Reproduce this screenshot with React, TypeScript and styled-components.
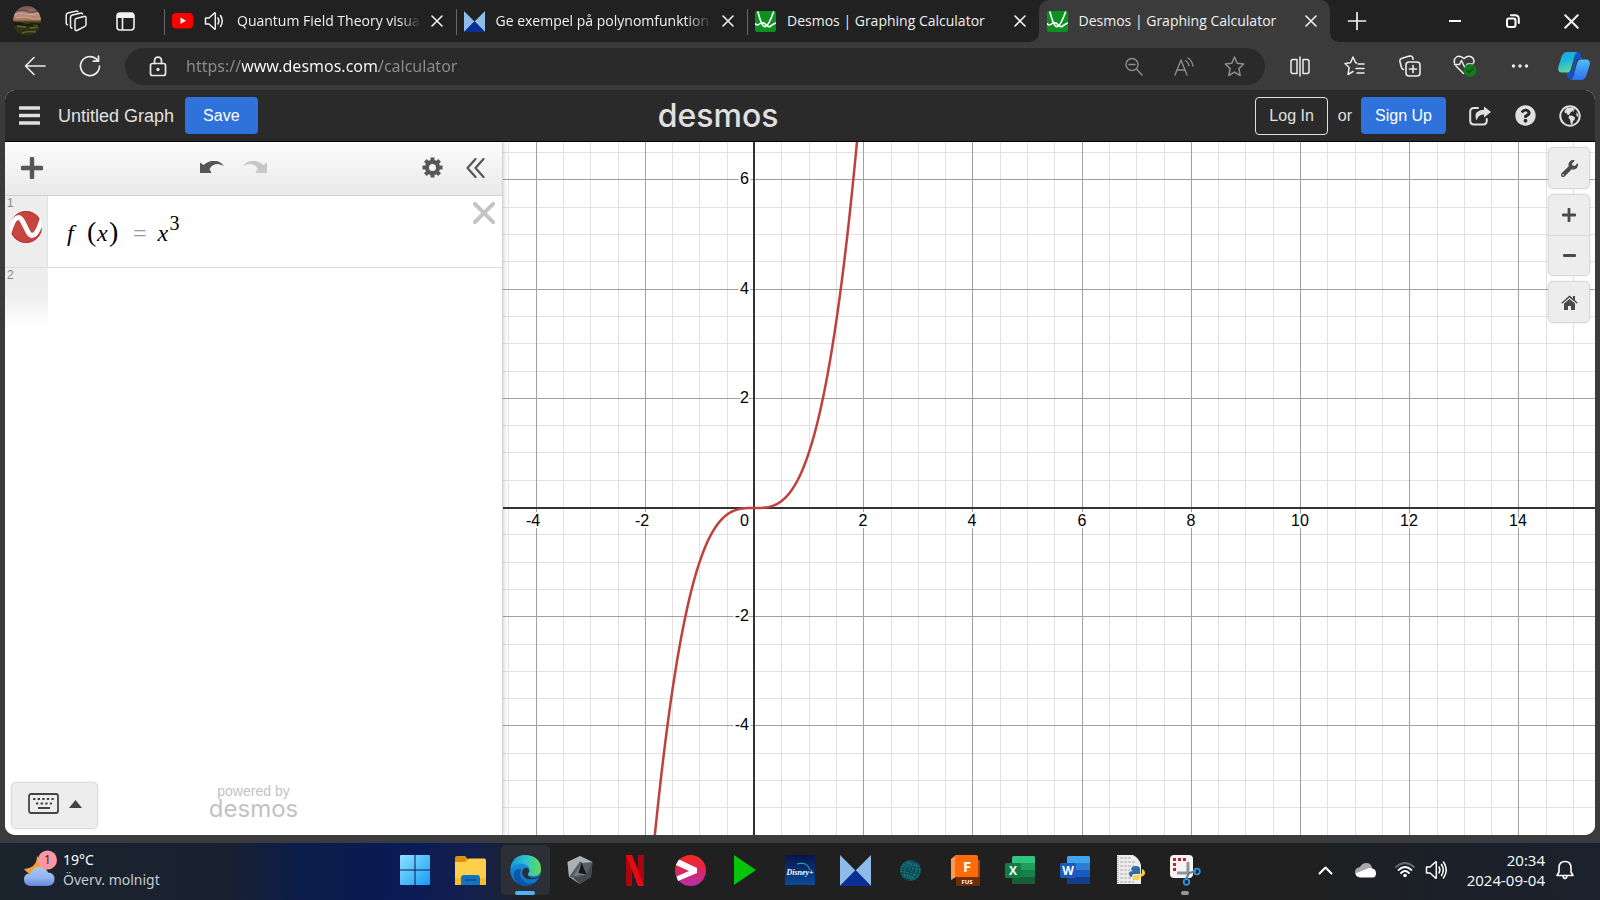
import React, { useLayoutEffect, useRef, useState } from "react";
import styled, { createGlobalStyle, css } from "styled-components";
import { FaWrench, FaQuestionCircle } from "react-icons/fa";

const ui = `"Open Sans", "Noto Sans", sans-serif`;
const uiWide = `"Noto Sans", "Open Sans", sans-serif`;
const sans = `"Liberation Sans", Arial, sans-serif`;
const logoFont = `Inter, "Liberation Sans", sans-serif`;

const GlobalStyle = createGlobalStyle`
  *, *::before, *::after { box-sizing: border-box; }
  html, body { margin: 0; height: 100%; }
  #root { height: 100%; }
  body { background: #3b3b3b; font-family: ${ui}; overflow: hidden; }
  button { font: inherit; color: inherit; background: none; border: 0; padding: 0; margin: 0; cursor: pointer; }
  svg { display: block; flex: none; }
`;

const Desktop = styled.div`
  display: flex;
  flex-direction: column;
  height: 100vh;
  min-height: 480px;
`;

/* ---------- browser chrome ---------- */

const TabStrip = styled.header`
  display: flex;
  flex: none;
  height: 42px;
  background: #212121;
  color: #f0f0f0;
`;

const StripTools = styled.div`
  display: flex;
  flex: none;
  align-items: center;
  width: 164px;
  padding-left: 13px;
`;

const Avatar = styled.button`
  width: 30px;
  height: 30px;
  margin-right: 23px;
  border-radius: 50%;
  overflow: hidden;
`;

const StripButton = styled.button`
  display: grid;
  place-items: center;
  width: 26px;
  height: 30px;
  margin-right: 26px;
`;

const TabList = styled.nav`
  display: flex;
  flex: 0 1 1166px;
  min-width: 0;
`;

const Tab = styled.div<{ $active?: boolean; $divider?: boolean }>`
  position: relative;
  display: flex;
  flex: 1 1 0;
  align-items: center;
  min-width: 0;
  padding: 0 9px 0 8px;
  ${(p) =>
    p.$divider &&
    css`
      &::before {
        content: "";
        position: absolute;
        left: 0;
        top: 9px;
        width: 1px;
        height: 26px;
        background: #666;
      }
    `}
  ${(p) =>
    p.$active &&
    css`
      background: #3b3b3b;
      border-radius: 10px 10px 0 0;
      &::before,
      &::after {
        content: "";
        position: absolute;
        bottom: 0;
        width: 8px;
        height: 8px;
      }
      &::before {
        right: 100%;
        background: radial-gradient(circle at 0 0, transparent 7px, #3b3b3b 8px);
      }
      &::after {
        left: 100%;
        background: radial-gradient(circle at 100% 0, transparent 7px, #3b3b3b 8px);
      }
    `}
`;

const TabTitle = styled.a<{ $fade?: boolean }>`
  flex: 1;
  min-width: 0;
  margin: 0 6px 0 11px;
  overflow: hidden;
  white-space: nowrap;
  font-size: 14px;
  line-height: 24px;
  color: inherit;
  text-decoration: none;
  ${(p) => p.$fade && css`mask-image: linear-gradient(to right, #000 88%, transparent 100%);`}
`;

const TabButton = styled.button`
  display: grid;
  flex: none;
  place-items: center;
  width: 20px;
  height: 24px;
`;

const MuteButton = styled(TabButton)`
  width: 22px;
  margin-left: 11px;
`;

const NewTab = styled.button`
  display: grid;
  flex: none;
  place-items: center;
  width: 54px;
`;

const WindowControls = styled.div`
  display: flex;
  flex: none;
  margin-left: auto;
`;

const WindowButton = styled.button`
  display: grid;
  place-items: center;
  width: 58px;
`;

const Toolbar = styled.div`
  display: flex;
  flex: none;
  align-items: center;
  height: 48px;
  padding: 0 0 0 15px;
  background: #3b3b3b;
  color: #ececec;
`;

const ToolButton = styled.button<{ $w?: number }>`
  display: grid;
  flex: none;
  place-items: center;
  width: ${(p) => p.$w ?? 55}px;
  height: 40px;
`;

const AddressBar = styled.form`
  display: flex;
  flex: 1;
  align-items: center;
  min-width: 0;
  height: 37px;
  margin-right: 7px;
  padding: 0 6px 0 24px;
  border-radius: 19px;
  background: #2a2a2a;
  color: #8e8e8e;
`;

const AddressInput = styled.input`
  flex: 1;
  min-width: 0;
  margin-left: 19px;
  padding: 0;
  border: 0;
  outline: 0;
  font: 16px/28px ${uiWide};
  color: transparent;
  caret-color: #fff;
  background: linear-gradient(to right, #8e8e8e 56px, #fff 56px, #fff 193px, #8e8e8e 193px);
  background-clip: text;
  -webkit-background-clip: text;
`;

/* ---------- calculator page ---------- */

const Page = styled.main`
  display: flex;
  flex: 1;
  flex-direction: column;
  min-height: 0;
  margin: 0 5px 7px;
  border-radius: 10px;
  overflow: hidden;
  background: #fff;
  font-family: ${sans};
`;

const AppHeader = styled.div`
  display: grid;
  flex: none;
  grid-template-columns: 4fr auto 5fr;
  align-items: center;
  height: 52px;
  padding: 0 14px 0 14px;
  background: #2a2a2a;
  border-bottom: 1px solid #000;
  color: #e0e0e0;
`;

const HeaderGroup = styled.div<{ $end?: boolean }>`
  display: flex;
  align-items: center;
  height: 38px;
  justify-content: ${(p) => (p.$end ? "flex-end" : "flex-start")};
  white-space: nowrap;
`;

const GraphName = styled.button`
  margin: 0 11px 0 18px;
  font-size: 18px;
  line-height: 24px;
`;

const Wordmark = styled.h1<{ $small?: boolean }>`
  margin: 0 4px 0 0;
  font: 500 32px/38px ${logoFont};
  ${(p) => p.$small && css`margin: 0; font: 400 24px/24px ${logoFont};`}
`;

const HeaderButton = styled.button<{ $outline?: boolean }>`
  height: ${(p) => (p.$outline ? 38 : 37)}px;
  padding: 0 ${(p) => (p.$outline ? 13 : 14)}px;
  border: ${(p) => (p.$outline ? "1px solid #e0e0e0" : "0")};
  border-radius: 4px;
  background: ${(p) => (p.$outline ? "transparent" : "#2f72dc")};
  color: ${(p) => (p.$outline ? "#e0e0e0" : "#fff")};
  font-size: 16px;
`;

const SaveButton = styled(HeaderButton)`
  padding: 0 18px;
`;

const Or = styled.span`
  margin: 0 9px 0 10px;
  font-size: 16px;
`;

const IconLink = styled.a`
  display: grid;
  place-items: center;
  width: 22px;
  margin-left: 23px;
  color: inherit;
`;

const Workspace = styled.div`
  display: flex;
  flex: 1;
  min-height: 0;
`;

const Panel = styled.section`
  position: relative;
  z-index: 1;
  display: flex;
  flex: none;
  flex-direction: column;
  width: 498px;
  background: #fff;
  border-right: 1px solid #d2d2d2;
  box-shadow: 1px 0 4px rgba(0, 0, 0, 0.18);
`;

const PanelBar = styled.div`
  display: grid;
  flex: none;
  grid-template-columns: 9fr auto 11fr;
  align-items: center;
  height: 54px;
  padding: 0 17px 2px 16px;
  border-bottom: 1px solid #cfcfcf;
  background: linear-gradient(#fcfcfc, #e9e9e9);
  color: #565656;
`;

const PanelGroup = styled.div<{ $end?: boolean; $gap: number }>`
  display: flex;
  align-items: center;
  gap: ${(p) => p.$gap}px;
  justify-content: ${(p) => (p.$end ? "flex-end" : "flex-start")};
`;

const Expressions = styled.ol`
  flex: 1;
  margin: 0;
  padding: 0;
  list-style: none;
`;

const Expression = styled.li<{ $last?: boolean }>`
  display: flex;
  height: 72px;
  border-bottom: ${(p) => (p.$last ? "0" : "1px solid #dcdcdc")};
`;

const Gutter = styled.div<{ $fade?: boolean }>`
  display: flex;
  flex: none;
  flex-direction: column;
  width: 43px;
  padding: 1px 0 0 2px;
  border-right: 1px solid #e2e2e2;
  background: #ededed;
  color: #8a8a8a;
  font-size: 12px;
  line-height: 13px;
  ${(p) =>
    p.$fade &&
    css`
      height: 58px;
      border-right-color: transparent;
      background: linear-gradient(#ededed 45%, #fff);
    `}
`;

const ColorDot = styled.button`
  width: 34px;
  height: 34px;
  margin-left: 2px;
`;

const Formula = styled.div`
  display: flex;
  flex: 1;
  align-items: baseline;
  padding: 20px 0 0 16px;
  color: #000;
  font: 24px/32px "Liberation Serif", "Times New Roman", serif;
  & i { width: 12px; }
  & i:first-child { width: 23px; padding-left: 3px; }
`;

const Paren = styled.span`
  width: 10px;
  font-size: 28px;
`;

const Equals = styled.span`
  margin: 0 11px 0 14px;
  color: #999;
`;

const Power = styled.sup`
  align-self: flex-start;
  font-size: 20px;
  line-height: 14px;
`;

const DeleteButton = styled.button`
  align-self: flex-start;
  margin: 6px 7px 0 0;
  color: #c4c4c4;
`;

const PanelFoot = styled.div`
  display: grid;
  flex: none;
  grid-template-columns: 1fr auto 1fr;
  align-items: center;
  padding: 0 6px 6px;
`;

const KeypadButton = styled.button`
  display: flex;
  align-items: center;
  justify-content: center;
  gap: 10px;
  width: 87px;
  height: 47px;
  padding-bottom: 4px;
  border: 1px solid #dadada;
  border-radius: 5px;
  background: #ededed;
  box-shadow: 0 0 3px rgba(0, 0, 0, 0.1);
  color: #444;
`;

const Powered = styled.div`
  padding-bottom: 6px;
  text-align: center;
  color: #c2c2c2;
  font-size: 14px;
  line-height: 12px;
`;

const PlotArea = styled.section`
  position: relative;
  flex: 1;
  min-width: 0;
  background: #fff;
`;

const PlotSvg = styled.svg`
  width: 100%;
  height: 100%;
`;

const PlotTools = styled.div`
  position: absolute;
  top: 5px;
  right: 5px;
  display: flex;
  flex-direction: column;
  gap: 5px;
`;

const ToolStack = styled.div`
  width: 42px;
  border: 1px solid #d8d8d8;
  border-radius: 5px;
  background: #ededed;
  box-shadow: 0 0 3px rgba(0, 0, 0, 0.1);
  color: #4a4a4a;
`;

const StackButton = styled.button`
  display: grid;
  place-items: center;
  width: 100%;
  height: 40px;
  & + & { border-top: 1px solid #d8d8d8; }
`;

/* ---------- desktop taskbar ---------- */

const Taskbar = styled.footer`
  display: grid;
  flex: none;
  grid-template-columns: 1fr auto 1fr;
  align-items: center;
  height: 58px;
  padding-bottom: 3px;
  border-top: 1px solid #333c4a;
  background: linear-gradient(to right, #1b232d 0%, #19212f 14%, #0c1c4b 19%, #0b1b55 26%, #15204a 30%, #202020 33%, #202020 82%, #1b2029 90%, #1b222d 100%);
  color: #fff;
`;

const Weather = styled.button`
  display: flex;
  align-items: center;
  gap: 6px;
  padding-left: 23px;
  text-align: left;
  font: 14px/20px ${uiWide};
  white-space: nowrap;
  & span { display: block; }
  & span + span { color: #c6c9ce; }
`;

const AppIcons = styled.div`
  display: flex;
`;

const AppButton = styled.button<{ $current?: boolean; $running?: boolean }>`
  position: relative;
  display: grid;
  place-items: center;
  width: 49px;
  height: 50px;
  margin: 0 3px;
  border-radius: 5px;
  background: ${(p) => (p.$current ? "#2d2f37" : "transparent")};
  ${(p) =>
    (p.$current || p.$running) &&
    css`
      &::after {
        content: "";
        position: absolute;
        bottom: 0;
        width: ${p.$current ? 20 : 8}px;
        height: 4px;
        border-radius: 2px;
        background: ${p.$current ? "#4cb4f0" : "#979797"};
      }
    `}
`;

const Tray = styled.div`
  display: flex;
  align-items: center;
  justify-content: flex-end;
  padding-right: 26px;
`;

const TrayButton = styled.button<{ $gap?: number }>`
  margin-right: ${(p) => p.$gap ?? 0}px;
`;

const Clock = styled.time`
  margin-right: 11px;
  text-align: right;
  font-size: 15px;
  line-height: 20px;
  & span { display: block; }
`;

/* ---------- drawings ---------- */

const line = { fill: "none", stroke: "currentColor", strokeLinecap: "round", strokeLinejoin: "round" } as const;

const Cross = ({ size = 12, w = 1.6 }: { size?: number; w?: number }) => (
  <svg width={size} height={size} viewBox="0 0 12 12" {...line} strokeWidth={w}><path d="M1 1 11 11M11 1 1 11" /></svg>
);

const AvatarArt = () => (
  <svg width="30" height="30" viewBox="0 0 30 30">
    <defs>
      <linearGradient id="sky" x2="0" y2="1">
        <stop offset="0" stopColor="#6d4f4b" /><stop offset=".3" stopColor="#b98f7f" /><stop offset=".46" stopColor="#a8765a" />
        <stop offset=".54" stopColor="#3c3a1c" /><stop offset="1" stopColor="#262d14" />
      </linearGradient>
    </defs>
    <rect width="30" height="30" fill="url(#sky)" />
    <path d="M1 9q7-3 12-1t16-2M3 12q9-2 14 0t12 0" stroke="#dcb09a" strokeWidth="1.200" fill="none" opacity=".7" />
    <path d="M4 5q6-2 10 0t11 0" stroke="#54403f" strokeWidth="1.400" fill="none" opacity=".7" />
    <path d="M0 15q4 2 7 1l6 2 8-1 9 1v3L0 20Z" fill="#1d1d10" />
    <path d="M4 20l9 1M17 22l8-1M9 27q6-2 14-1" stroke="#5f6a24" strokeWidth="1.400" fill="none" />
    <path d="M20 19l5 .5" stroke="#7a3f22" strokeWidth="1.200" />
  </svg>
);

const Workspaces = () => (
  <svg width="22" height="22" viewBox="0 0 22 22" {...line} strokeWidth="1.500">
    <path d="m12 8.200 7-1.800q2-.4 2 1.600v6.500q0 1.600-1.500 2.100L12 20.500q-2 .5-2-1.500v-8.500Q10 8.700 12 8.200Z" />
    <path d="M17.500 4Q17 2.800 15 3.200L7.500 5Q5.500 5.500 5.500 7.300v9q0 1.500 1.300 1.900M12.800 1.600Q12 .8 10.500 1.200L3 3Q1.200 3.500 1.200 5.200V13q0 1.500 1.300 1.900" />
  </svg>
);

const TabActions = () => (
  <svg width="19" height="19" viewBox="0 0 19 19">
    <rect x="1" y="1" width="17" height="17" rx="3" {...line} strokeWidth="1.600" />
    <path d="M1 6V4a3 3 0 0 1 3-3h11a3 3 0 0 1 3 3v2Z" fill="currentColor" />
    <path d="M6.500 6v12" stroke="currentColor" strokeWidth="1.600" />
  </svg>
);

const YouTube = () => (
  <svg width="21" height="16" viewBox="0 0 21 16"><rect width="21" height="15.500" rx="4" fill="#f00" /><path d="m8.500 4.500 5.500 3.300-5.500 3.200Z" fill="#fff" /></svg>
);

const Speaker = ({ waves = 2 }: { waves?: number }) => (
  <svg width="22" height="22" viewBox="0 0 22 22" {...line} strokeWidth="1.500">
    <path d="M1.500 8v6H5l5.500 5q.8.500.8-.5v-15q0-1-.8-.5L5 8Z" />
    <path d="M14 8q1.800 3 0 6" /><path d="M16.500 5.500q3.500 5.500 0 11" />
    {waves > 2 && <path d="M18.500 3q5.500 8 0 16" />}
  </svg>
);

const Butterfly = ({ size = 21 }: { size?: number }) => (
  <svg width={size} height={size} viewBox="0 0 30 30">
    <path d="M0 0v30L15 15ZM30 0v30L15 15Z" fill="#8dbce8" /><path d="M15 14.500 0 30h30Z" fill="#0a2f95" />
  </svg>
);

const DesmosFavicon = () => (
  <svg width="21" height="21" viewBox="0 0 21 21">
    <rect width="21" height="21" rx="2" fill="#0c9120" />
    <path d="M3 1q4 16 7.500 14.500T18.500 1M0 12.500q2 2.500 4.500.500t5-.8q3.500 4.500 6 3 2-1.800 5.500-3.200" {...line} stroke="#fff" strokeWidth="1.600" />
  </svg>
);

const Back = () => (
  <svg width="22" height="20" viewBox="0 0 22 20" {...line} strokeWidth="1.600"><path d="M21 10H1.500M10 1.500 1.500 10l8.500 8.500" /></svg>
);

const Reload = () => (
  <svg width="22" height="22" viewBox="0 0 22 22" {...line} strokeWidth="1.700"><path d="M20.500 11a9.500 9.500 0 1 1-3.500-7.300L19.500 6M19.500 1v5.200h-5.200" /></svg>
);

const Lock = () => (
  <svg width="18" height="21" viewBox="0 0 18 21" {...line} strokeWidth="1.700" stroke="#e8e8e8">
    <rect x="1.500" y="7.500" width="15" height="12" rx="2" /><path d="M5.500 7.500V5q0-3.800 3.500-3.800T12.500 5v2.500" /><circle cx="9" cy="13.500" r=".8" fill="#e8e8e8" />
  </svg>
);

const ZoomOut = () => (
  <svg width="18" height="19" viewBox="0 0 18 19" {...line} strokeWidth="1.400"><circle cx="7" cy="7.500" r="6" /><path d="m11.500 12 5.500 6M4 7.500h6" /></svg>
);

const ReadAloud = () => (
  <svg width="20" height="19" viewBox="0 0 20 19" {...line} strokeWidth="1.400"><path d="M1 18 7 3l6 15M3.200 13h7.700M11.500 3.500q2.500 1.500 3.500 5M14 1q4 2.500 5 8" /></svg>
);

const Star = ({ lines }: { lines?: boolean }) => (
  <svg width="21" height="21" viewBox="0 0 21 21" {...line} strokeWidth="1.500">
    {lines ? (
      <path d="M12.500 7 11.500 6.500 9 1 6.500 6.700 1 7.500l4.200 4-1.200 7L9 15.500M14 8h6M12 12.500h8M13 17h7" />
    ) : (
      <path d="m10.500 1 2.700 6.200 6.500.8-4.800 4.600 1.300 6.900-5.700-3.400-5.700 3.400 1.300-6.900L1.300 8l6.500-.8Z" />
    )}
  </svg>
);

const SplitScreen = () => (
  <svg width="20" height="21" viewBox="0 0 20 21" {...line} strokeWidth="1.500"><path d="M7 3.500H3Q1 3.500 1 5.500v10q0 2 2 2h4M13 3.500h4q2 0 2 2v10q0 2-2 2h-4M10 1v19M7 3.500v14M13 3.500v14" /></svg>
);

const Collections = () => (
  <svg width="22" height="22" viewBox="0 0 22 22" {...line} strokeWidth="1.600">
    <rect x="7" y="7" width="14" height="14" rx="3" /><path d="M14 10.500v7M10.500 14h7M4.500 14.500q-1.500-.5-2-2L.9 6.500Q.5 4 3 3.300l7.500-2.200q2.500-.6 3.200 1.500l.4 1.600" />
  </svg>
);

const Essentials = () => (
  <svg width="24" height="23" viewBox="0 0 24 23">
    <path d="M10.500 18.500 3 11M1.500 8q-1-4 2-6t7.500 1.500Q15 0 18.500 2T20.500 8M1.500 9.500h5l2-4 3.500 7.500 2.500-4h5" {...line} strokeWidth="1.500" />
    <circle cx="17" cy="15.500" r="6.500" fill="#117a1a" /><path d="m14 15.500 2 2 4-4" {...line} stroke="#0a4a10" strokeWidth="1.400" />
  </svg>
);

const Dots = () => (
  <svg width="18" height="6" viewBox="0 0 18 6" fill="currentColor"><circle cx="2.500" cy="3" r="1.700" /><circle cx="9" cy="3" r="1.700" /><circle cx="15.500" cy="3" r="1.700" /></svg>
);

const Copilot = () => (
  <svg width="32" height="28" viewBox="0 0 32 28">
    <defs>
      <linearGradient id="cpA" x2=".3" y2="1"><stop stopColor="#12a5ee" /><stop offset=".5" stopColor="#20b6d8" /><stop offset="1" stopColor="#5fd59a" /></linearGradient>
      <linearGradient id="cpB" x2="0" y2="1"><stop stopColor="#4fbdf7" /><stop offset="1" stopColor="#2a6ff0" /></linearGradient>
    </defs>
    <path d="M17 0h3q2 0 2.800 2.600L24 7h-5L14 27h-2q-2 0-2.800-2.500L8 20l6-2Z" fill="#1552c4" />
    <path d="M9 0h11q-2.500.5-3.500 4L13 16.500q-1 4-4 4H4q-5 0-3.500-6L3.500 5Q5 0 9 0Z" fill="url(#cpA)" />
    <path d="M23 28H12q2.500-.5 3.500-4L19 11.500q1-4 4-4h5q5 0 3.500 6L28.500 23Q27 28 23 28Z" fill="url(#cpB)" />
  </svg>
);

const Burger = () => (
  <svg width="21" height="20" viewBox="0 0 21 20"><path d="M1 2h19M1 9.500h19M1 17h19" stroke="currentColor" strokeWidth="3.400" strokeLinecap="round" /></svg>
);

const ShareIcon = () => (
  <svg width="22" height="20" viewBox="0 0 22 20">
    <path d="M9 2H5Q1.200 2 1.200 5.500v9Q1.200 18.500 5 18.500h9q3.800 0 3.800-4V13" fill="none" stroke="currentColor" strokeWidth="2" strokeLinecap="round" />
    <path d="M15 .5 22 6l-7 5.500V8.500Q9.500 8 7.500 14.500 3.500 4.500 15 3.700Z" fill="currentColor" />
  </svg>
);

const GlobeIcon = () => (
  <svg width="22" height="22" viewBox="0 0 22 22">
    <circle cx="11" cy="11" r="9.700" fill="none" stroke="currentColor" strokeWidth="2" />
    <path d="M5.500 6 8 3l5.500-.5 2.500 2-1.500.5.500 2-1.500-1-2 1.500-1.500 2.500-2-.5-.5-2-1.500 1ZM10 10.500l3.500.3 2.500 1.700-.5 2.500-1.500 1-.5 3-1.500.500-1-5L9.500 13ZM17.500 7l1.500 2 .3 3-1.800-1Z" fill="currentColor" />
  </svg>
);

const Plus = ({ size = 20, w = 4 }: { size?: number; w?: number }) => (
  <svg width={size} height={size} viewBox="0 0 20 20"><path d="M10 1.500v17M1.500 10h17" stroke="currentColor" strokeWidth={w} strokeLinecap="round" /></svg>
);

const Minus = () => (
  <svg width="13" height="13" viewBox="0 0 13 13"><path d="M1 6.500h11" stroke="currentColor" strokeWidth="2.800" strokeLinecap="round" /></svg>
);

const Undo = ({ flip }: { flip?: boolean }) => (
  <svg width="24" height="14" viewBox="0 0 24 14" fill={flip ? "#c8c8c8" : "#565656"}>
    <g transform={flip ? "translate(24 0) scale(-1 1)" : undefined}><path d="M0 1.500 3.500 4Q8.500-.4 14.500-.4 20.500 0 24 5q-6-2.800-9.500-1.500-3.500 1-5 4.500l2 4H0Z" /></g>
  </svg>
);

const Gear = () => (
  <svg width="21" height="21" viewBox="0 0 21 21">
    <circle cx="10.500" cy="10.500" r="5.600" fill="none" stroke="currentColor" strokeWidth="4.200" />
    {[0, 45, 90, 135].map((a) => (
      <path key={a} d="M8.500.5h4v3h-4ZM8.500 17.500h4v3h-4Z" fill="currentColor" transform={`rotate(${a} 10.500 10.500)`} />
    ))}
  </svg>
);

const House = () => (
  <svg width="17" height="15" viewBox="0 0 17 15" fill="currentColor">
    <path d="M8.500.5 12 3.500V1h2v4.300L16.700 7.800l-.8.900L8.500 2.400 1.100 8.700l-.8-.9Z" />
    <path d="M8.500 4 14 8.500V15h-4v-4H7v4H3V8.500Z" />
  </svg>
);

const Collapse = () => (
  <svg width="19" height="20" viewBox="0 0 19 20" {...line} strokeWidth="2.200"><path d="M9.500 1 1.500 10l8 9M17.500 1l-8 9 8 9" /></svg>
);

const CurveDot = () => (
  <svg width="34" height="34" viewBox="0 0 34 34">
    <defs><clipPath id="dot"><circle cx="17" cy="17" r="16.500" /></clipPath></defs>
    <circle cx="17" cy="17" r="16" fill="#c74440" />
    <circle cx="17" cy="17" r="15.500" fill="none" stroke="#b53532" />
    <g clipPath="url(#dot)"><path d="M0 23C3 12 6 7.500 9.500 7.500c5 0 8.500 18 13.500 18 3.500 0 7-6 10-16" fill="none" stroke="#fff" strokeWidth="5" /></g>
  </svg>
);

const Keyboard = () => (
  <svg width="31" height="21" viewBox="0 0 31 21">
    <rect x="1" y="1" width="29" height="19" rx="2" fill="none" stroke="currentColor" strokeWidth="1.800" />
    <path d="M5 6h21M8 10.500h16" stroke="currentColor" strokeWidth="2.200" strokeDasharray="2.400 2.200" /><path d="M10 15h12" stroke="currentColor" strokeWidth="2" />
  </svg>
);

const WeatherArt = () => (
  <svg width="34" height="40" viewBox="0 0 34 40">
    <defs><linearGradient id="cloud" x2="0" y2="1"><stop stopColor="#a9c8f5" /><stop offset=".6" stopColor="#8fb1ee" /><stop offset="1" stopColor="#6488d8" /></linearGradient></defs>
    <path d="M14 6q0 12-13 13 4 6 11 5 9-2 8-12Z" fill="#f0a032" />
    <path d="M8 36q-7 0-7-6.500T8 23q2-6 8.500-6T25 22.500q6.500.5 6.500 6.500T25 36Z" fill="url(#cloud)" />
    <circle cx="24.500" cy="10" r="9.500" fill="#ff96a2" />
    <text x="24.500" y="14" textAnchor="middle" fontFamily="Open Sans" fontSize="12" fill="#2a1a1c">1</text>
  </svg>
);

const WindowsArt = () => (
  <svg width="30" height="30" viewBox="0 0 30 30">
    <defs><linearGradient id="win" x2="1" y2="1"><stop stopColor="#8fe0ff" /><stop offset="1" stopColor="#159df5" /></linearGradient></defs>
    <path d="M0 1q0-1 1-1h13.500v14.500H0ZM15.500 0H29q1 0 1 1v13.500H15.500ZM0 15.500h14.500V30H1q-1 0-1-1ZM15.500 15.500H30V29q0 1-1 1H15.500Z" fill="url(#win)" />
  </svg>
);

const FolderArt = () => (
  <svg width="31" height="29" viewBox="0 0 31 29">
    <path d="M0 2q0-2 2-2h8l3 3v6H0Z" fill="#d9930f" /><path d="M0 6h10l4-3.500h15q2 0 2 2V29H0Z" fill="#ffcf4b" />
    <path d="M0 22h31v7H0Z" fill="#f9bd2c" /><path d="M6 29V22q0-3 3-3h13q3 0 3 3v7Z" fill="#1174c2" /><path d="M10 24h11" stroke="#0a4f8c" strokeWidth="1.500" />
  </svg>
);

const EdgeArt = () => (
  <svg width="31" height="31" viewBox="0 0 31 31">
    <defs>
      <linearGradient id="edT" x1="0" x2="1"><stop stopColor="#1899d8" /><stop offset=".5" stopColor="#30c2cc" /><stop offset="1" stopColor="#62dd4f" /></linearGradient>
      <linearGradient id="edL" x2="0" y2="1"><stop stopColor="#1a9be0" /><stop offset="1" stopColor="#0f6cc4" /></linearGradient>
    </defs>
    <circle cx="15.500" cy="15.500" r="15.200" fill="url(#edL)" />
    <path d="M11 14q-3 10 6 14 6 2 11-3-4 6-12.500 6Q6 31 4 22q-1-9 7-8Z" fill="#0c4ba0" opacity=".75" />
    <path d="M.5 14Q2 0 15.500 0 31 1 31 14.500 31 21 24 21t-6-2.500q2-1.500 1.500-4Q18.500 9 11 8.500 4 8.500.5 14Z" fill="url(#edT)" />
    <path d="M13.500 14q-3 4 .5 8t14 1l2-2q-5 2.500-9 1.500-4-1.500-3-4 2-2 .5-4.500-2-2.500-5 0Z" fill="#2d2f37" />
  </svg>
);

const HexArt = () => (
  <svg width="28" height="30" viewBox="0 0 28 30">
    <path d="M14 1 26.500 7 25 22l-11 7L3 22 1.500 7Z" fill="#585e63" />
    <path d="M14 1 26.500 7 17 8l-3-1.500L3 22 1.500 7Z" fill="#aab0b4" />
    <path d="M14 29 25 22 26.500 7 20 20 7 23Z" fill="#43494e" />
    <path d="M14 29 7 22.500l-4-.5Z" fill="#8f959a" />
    <path d="m15.500 7.500 5 12L7 21.500Z" fill="#15181b" /><path d="M15.500 7.500 12.500 18l8 1.500L7 21.500Z" fill="#777d82" />
  </svg>
);

const NArt = () => (
  <svg width="18" height="31" viewBox="0 0 18 31"><path d="M0 0h6v31H0ZM12 0h6v31h-6Z" fill="#a90710" /><path d="M0 0h6l12 31h-6Z" fill="#e50914" /></svg>
);

const ViaArt = () => (
  <svg width="31" height="31" viewBox="0 0 31 31">
    <defs><linearGradient id="via" x2="0" y2="1"><stop stopColor="#f52b1c" /><stop offset=".45" stopColor="#e02555" /><stop offset="1" stopColor="#b72fae" /></linearGradient></defs>
    <circle cx="15.500" cy="15.500" r="15.500" fill="url(#via)" /><path d="m4 4.500 18 8.500v5L3 26l-1.500-4.500L14 16 .8 10Z" fill="#fff" />
  </svg>
);

const PlayArt = () => <svg width="22" height="30" viewBox="0 0 22 30"><path d="M0 0 22 15 0 30Z" fill="#08c408" /></svg>;

const DisneyArt = () => (
  <svg width="30" height="30" viewBox="0 0 30 30">
    <defs><linearGradient id="dis" x2="0" y2="1"><stop stopColor="#081447" /><stop offset="1" stopColor="#0a4a9c" /></linearGradient></defs>
    <rect width="30" height="30" fill="url(#dis)" /><path d="M12 9q10-3 13 6" fill="none" stroke="#36b9d8" />
    <text x="15" y="20" textAnchor="middle" fontFamily="Liberation Serif" fontStyle="italic" fontWeight="700" fontSize="8" fill="#fff">Disney+</text>
  </svg>
);

const WireGlobe = () => (
  <svg width="21" height="21" viewBox="0 0 21 21">
    <circle cx="10.500" cy="10.500" r="10.200" fill="#12808a" />
    <g fill="none" stroke="#0b4046" strokeWidth="1" transform="rotate(18 10.500 10.500)"><ellipse cx="10.500" cy="10.500" rx="3.500" ry="10" /><ellipse cx="10.500" cy="10.500" rx="7.500" ry="10" /><path d="M10.500 0v21M0 10.500h21M2 5q8 3 17 0M2 16q8-3 17 0M1 8q9 2 19 0M1 13q9-2 19 0" /></g>
  </svg>
);

const FusionArt = () => (
  <svg width="29" height="31" viewBox="0 0 29 31">
    <path d="M24 5h5v26H6v-9Z" fill="#a04208" /><path d="M0 4 5 0v22l-5 3Z" fill="#ff9a4f" /><path d="M5 0h20q2 0 2 2v20H4V1Z" fill="#ff6b0a" /><path d="M5 22h24v9H5Z" fill="#6f2d08" />
    <text x="16" y="17" textAnchor="middle" fontFamily="Open Sans" fontWeight="700" fontSize="15" fill="#fff">F</text>
    <text x="16" y="29" textAnchor="middle" fontFamily="Open Sans" fontWeight="700" fontSize="6" fill="#fff">FUS</text>
  </svg>
);

const OfficeArt = ({ letter, shades }: { letter: string; shades: string[] }) => (
  <svg width="30" height="28" viewBox="0 0 30 28">
    <rect x="7" width="23" height="28" rx="2" fill={shades[1]} /><path d="M7 7V2q0-2 2-2h19q2 0 2 2v5Z" fill={shades[0]} /><path d="M7 14h23v7H7Z" fill={shades[2]} /><path d="M7 21h23v5q0 2-2 2H9q-2 0-2-2Z" fill={shades[3]} />
    <rect y="7" width="16" height="15" rx="1.500" fill={shades[4]} />
    <text x="8" y="19" textAnchor="middle" fontFamily="Open Sans" fontWeight="700" fontSize="12" fill="#fff">{letter}</text>
  </svg>
);

const PythonArt = () => (
  <svg width="29" height="30" viewBox="0 0 29 30">
    <path d="M1 0h16q6 3 8 10v19H1Z" fill="#ececec" /><path d="M4 3h12M4 7h16M4 11h15M4 15h10M4 19h10M4 23h12M4 27h14" stroke="#aaa" strokeDasharray="3 1" /><path d="M2 1v28" stroke="#888" strokeDasharray="1 1" />
    <path d="M15 15q0-4 5-4 4 0 4 3v5h-6q-2 0-2 3h-1q-2-1-2-4 0-2 4-2Z" fill="#2f6ea5" /><path d="M26 14q3 1 3 4t-5 4h-1v3h-6v-3q0-2 3-2h3q3 0 3-3Z" fill="#ffcf3c" />
  </svg>
);

const SnipArt = () => (
  <svg width="32" height="32" viewBox="0 0 32 32">
    <rect x="1" y="1" width="23" height="23" rx="4" fill="#f4f4f4" /><path d="M5.500 17V5.500H18" fill="none" stroke="#d01e26" strokeWidth="3" strokeDasharray="3 2" />
    <path d="M19 8v11H8" fill="none" stroke="#8b9299" strokeWidth="3" /><path d="m17 25 3-6 7-2" fill="none" stroke="#727b83" strokeWidth="2" />
    <circle cx="28" cy="17.500" r="2.800" fill="none" stroke="#2c93e0" strokeWidth="1.800" /><circle cx="17.500" cy="28" r="2.800" fill="none" stroke="#2c93e0" strokeWidth="1.800" />
  </svg>
);

const CaretUp = () => <svg width="15" height="9" viewBox="0 0 15 9" {...line} strokeWidth="2"><path d="m1.500 7.500 6-6 6 6" /></svg>;

const CloudIcon = () => (
  <svg width="21" height="15" viewBox="0 0 21 15"><path d="M5 14q-5-1-5-5t5-5q2-4 6.500-4T17 5L9 12Z" fill="#a9a9a9" /><path d="M5 14.500q-4-.5-4.500-4L14 5q7 0 7 5t-4 4.500Z" fill="#fff" /></svg>
);

const Wifi = () => (
  <svg width="20" height="18" viewBox="0 0 20 18" {...line} strokeWidth="1.800">
    <path d="M1 6q9-8 18 0" stroke="#6b6b6b" /><path d="M3.500 9q6.500-6 13 0M6 12q4-4 8 0" /><circle cx="10" cy="14.500" r="1.800" fill="currentColor" stroke="none" />
  </svg>
);

const Bell = () => (
  <svg width="18" height="20" viewBox="0 0 18 20" {...line} strokeWidth="1.600"><path d="M3 12V8q0-6.500 6-6.500T15 8v4l2 3.500H1ZM7 16q.5 2.500 2 2.500T11 16" /></svg>
);

/* ---------- graph ---------- */

const ORIGIN = { x: 251, y: 365 };
const UNIT = 54.6;
const px = (n: number, axis: "x" | "y") => Math.round(axis === "x" ? ORIGIN.x + n * UNIT : ORIGIN.y - n * UNIT);

/* Half-unit steps whose grid lines fall inside the viewport. */
const steps = (from: number, to: number) => {
  const list: number[] = [];
  for (let h = Math.ceil(from * 2); h <= Math.floor(to * 2); h++) if (h) list.push(h);
  return list;
};

const curve = Array.from({ length: 241 }, (_, i) => {
  const t = -3 + i * 0.025;
  return `${i ? "L" : "M"}${(ORIGIN.x + t * UNIT).toFixed(2)} ${(ORIGIN.y + 1 - t ** 3 * UNIT).toFixed(2)}`;
}).join("");

const isMajor = (h: number) => h % 4 === 0;
const gridColor = (h: number) => (isMajor(h) ? "#a0a0a0" : "#e2e2e2");
const majorLast = (a: number, b: number) => Number(isMajor(a)) - Number(isMajor(b));

function Plot() {
  const ref = useRef<SVGSVGElement>(null);
  const [size, setSize] = useState({ w: 1092, h: 693 });

  useLayoutEffect(() => {
    const el = ref.current;
    if (!el) return;
    const measure = () => {
      const box = el.getBoundingClientRect();
      setSize({ w: box.width, h: box.height });
    };
    measure();
    const observer = new ResizeObserver(measure);
    observer.observe(el);
    return () => observer.disconnect();
  }, []);

  const xs = steps(-ORIGIN.x / UNIT, (size.w - ORIGIN.x) / UNIT);
  const ys = steps((ORIGIN.y - size.h) / UNIT, ORIGIN.y / UNIT);
  const lines = [
    ...xs.map((h) => ({ h, axis: "x" as const })),
    ...ys.map((h) => ({ h, axis: "y" as const })),
  ].sort((a, b) => majorLast(a.h, b.h));

  return (
    <PlotSvg ref={ref} role="img" aria-label="Graph of f(x) = x cubed">
      <g shapeRendering="crispEdges">
        {lines.map(({ h, axis }) =>
          axis === "x" ? (
            <rect key={`x${h}`} x={px(h / 2, "x")} y="0" width="1" height="100%" fill={gridColor(h)} />
          ) : (
            <rect key={`y${h}`} x="0" y={px(h / 2, "y")} width="100%" height="1" fill={gridColor(h)} />
          )
        )}
        <rect x={ORIGIN.x - 1} y="0" width="2" height="100%" fill="#333" />
        <rect x="0" y={ORIGIN.y} width="100%" height="2" fill="#333" />
      </g>
      <g fontFamily="Liberation Sans, Arial, sans-serif" fontSize="16" fill="#000" stroke="#fff" strokeWidth="4" paintOrder="stroke" strokeLinejoin="round">
        {xs.filter(isMajor).map((h) => (
          <text key={`x${h}`} x={px(h / 2, "x") - (h < 0 ? 3 : 0)} y={ORIGIN.y + 19} textAnchor="middle">{h / 2}</text>
        ))}
        {ys.filter((h) => isMajor(h) && px(h / 2, "y") < size.h - 10).map((h) => (
          <text key={`y${h}`} x={ORIGIN.x - 5} y={px(h / 2, "y") + 5} textAnchor="end">{h / 2}</text>
        ))}
        <text x={ORIGIN.x - 5} y={ORIGIN.y + 19} textAnchor="end">0</text>
      </g>
      <path d={curve} fill="none" stroke="#c0403b" strokeWidth="2.500" />
    </PlotSvg>
  );
}

/* ---------- screen ---------- */

const apps: { name: string; art: React.ReactNode; current?: boolean; running?: boolean }[] = [
  { name: "Start", art: <WindowsArt /> },
  { name: "File Explorer", art: <FolderArt /> },
  { name: "Edge", art: <EdgeArt />, current: true },
  { name: "Hexagon", art: <HexArt /> },
  { name: "Netflix", art: <NArt /> },
  { name: "Viaplay", art: <ViaArt /> },
  { name: "Play", art: <PlayArt /> },
  { name: "Disney+", art: <DisneyArt /> },
  { name: "Math", art: <Butterfly size={31} /> },
  { name: "Globe", art: <WireGlobe /> },
  { name: "Fusion", art: <FusionArt /> },
  { name: "Excel", art: <OfficeArt letter="X" shades={["#2fc481", "#1f9d5b", "#12834a", "#185c37", "#107c41"]} /> },
  { name: "Word", art: <OfficeArt letter="W" shades={["#41a5ee", "#2b7cd3", "#185abd", "#123f8c", "#185abd"]} /> },
  { name: "IDLE", art: <PythonArt /> },
  { name: "Snipping Tool", art: <SnipArt />, running: true },
];

const tabs = [
  { title: "Quantum Field Theory visua", icon: <YouTube />, sound: true, fade: true },
  { title: "Ge exempel på polynomfunktion", icon: <Butterfly />, fade: true },
  { title: "Desmos | Graphing Calculator", icon: <DesmosFavicon /> },
  { title: "Desmos | Graphing Calculator", icon: <DesmosFavicon />, active: true },
];

export default function App() {
  return (
    <Desktop>
      <GlobalStyle />
      <TabStrip>
        <StripTools>
          <Avatar aria-label="Profile"><AvatarArt /></Avatar>
          <StripButton aria-label="Workspaces"><Workspaces /></StripButton>
          <StripButton aria-label="Tab actions"><TabActions /></StripButton>
        </StripTools>
        <TabList aria-label="Tabs">
          {tabs.map((t, i) => (
            <Tab key={i} $active={t.active} $divider={!t.active}>
              {t.icon}
              {t.sound && <MuteButton aria-label="Mute tab"><Speaker /></MuteButton>}
              <TabTitle href="#" $fade={t.fade}>{t.title}</TabTitle>
              <TabButton aria-label="Close tab"><Cross /></TabButton>
            </Tab>
          ))}
        </TabList>
        <NewTab aria-label="New tab"><Plus size={20} w={1.7} /></NewTab>
        <WindowControls>
          <WindowButton aria-label="Minimize"><svg width="14" height="14" viewBox="0 0 14 14"><path d="M1 7h12" stroke="#fff" strokeWidth="2" /></svg></WindowButton>
          <WindowButton aria-label="Restore">
            <svg width="14" height="14" viewBox="0 0 14 14" {...line} stroke="#fff" strokeWidth="2"><rect x="1" y="4.500" width="8.500" height="8.500" rx="2" /><path d="M5 1.200h4q3.800 0 3.800 3.800v4" /></svg>
          </WindowButton>
          <WindowButton aria-label="Close"><Cross size={15} w={1.600} /></WindowButton>
        </WindowControls>
      </TabStrip>

      <Toolbar>
        <ToolButton $w={40} aria-label="Back"><Back /></ToolButton>
        <ToolButton $w={70} aria-label="Refresh"><Reload /></ToolButton>
        <AddressBar onSubmit={(e) => e.preventDefault()}>
          <Lock />
          <AddressInput aria-label="Address" defaultValue="https://www.desmos.com/calculator" />
          <ToolButton $w={50} type="button" aria-label="Zoom out"><ZoomOut /></ToolButton>
          <ToolButton $w={50} type="button" aria-label="Read aloud"><ReadAloud /></ToolButton>
          <ToolButton $w={50} type="button" aria-label="Add to favorites"><Star /></ToolButton>
        </AddressBar>
        <ToolButton aria-label="Split screen"><SplitScreen /></ToolButton>
        <ToolButton aria-label="Favorites"><Star lines /></ToolButton>
        <ToolButton aria-label="Collections"><Collections /></ToolButton>
        <ToolButton aria-label="Browser essentials"><Essentials /></ToolButton>
        <ToolButton aria-label="Settings and more"><Dots /></ToolButton>
        <ToolButton $w={53} aria-label="Copilot"><Copilot /></ToolButton>
      </Toolbar>

      <Page>
        <AppHeader>
          <HeaderGroup>
            <button aria-label="Open graph list"><Burger /></button>
            <GraphName>Untitled Graph</GraphName>
            <SaveButton>Save</SaveButton>
          </HeaderGroup>
          <Wordmark>desmos</Wordmark>
          <HeaderGroup $end>
            <HeaderButton $outline>Log In</HeaderButton>
            <Or>or</Or>
            <HeaderButton>Sign Up</HeaderButton>
            <IconLink href="#" aria-label="Share"><ShareIcon /></IconLink>
            <IconLink href="#" aria-label="Help"><FaQuestionCircle size={21} /></IconLink>
            <IconLink href="#" aria-label="Language"><GlobeIcon /></IconLink>
          </HeaderGroup>
        </AppHeader>

        <Workspace>
          <Panel>
            <PanelBar>
              <PanelGroup $gap={0}><button aria-label="Add item"><Plus size={22} /></button></PanelGroup>
              <PanelGroup $gap={19}>
                <button aria-label="Undo"><Undo /></button>
                <button aria-label="Redo"><Undo flip /></button>
              </PanelGroup>
              <PanelGroup $gap={23} $end>
                <button aria-label="Edit list"><Gear /></button>
                <button aria-label="Hide list"><Collapse /></button>
              </PanelGroup>
            </PanelBar>
            <Expressions>
              <Expression>
                <Gutter>1<ColorDot aria-label="Hide expression 1"><CurveDot /></ColorDot></Gutter>
                <Formula role="math">
                  <i>f</i><Paren>(</Paren><i>x</i><Paren>)</Paren><Equals>=</Equals><i>x</i><Power>3</Power>
                </Formula>
                <DeleteButton aria-label="Delete expression 1"><Cross size={22} w={2.200} /></DeleteButton>
              </Expression>
              <Expression $last><Gutter $fade>2</Gutter></Expression>
            </Expressions>
            <PanelFoot>
              <KeypadButton aria-label="Show keypad">
                <Keyboard />
                <svg width="13" height="8" viewBox="0 0 13 8"><path d="M6.500 0 13 8H0Z" fill="currentColor" /></svg>
              </KeypadButton>
              <Powered>powered by<Wordmark as="div" $small>desmos</Wordmark></Powered>
            </PanelFoot>
          </Panel>
          <PlotArea>
            <Plot />
            <PlotTools>
              <ToolStack><StackButton aria-label="Graph settings"><FaWrench size={17} /></StackButton></ToolStack>
              <ToolStack>
                <StackButton aria-label="Zoom in"><Plus size={14} w={4} /></StackButton>
                <StackButton aria-label="Zoom out"><Minus /></StackButton>
              </ToolStack>
              <ToolStack><StackButton aria-label="Default viewport"><House /></StackButton></ToolStack>
            </PlotTools>
          </PlotArea>
        </Workspace>
      </Page>

      <Taskbar>
        <Weather>
          <WeatherArt />
          <span><span>19°C</span><span>Överv. molnigt</span></span>
        </Weather>
        <AppIcons>
          {apps.map((a) => (
            <AppButton key={a.name} aria-label={a.name} $current={a.current} $running={a.running}>{a.art}</AppButton>
          ))}
        </AppIcons>
        <Tray>
          <TrayButton $gap={22} aria-label="Hidden icons"><CaretUp /></TrayButton>
          <TrayButton $gap={19} aria-label="OneDrive"><CloudIcon /></TrayButton>
          <TrayButton $gap={10} aria-label="Network"><Wifi /></TrayButton>
          <TrayButton $gap={20} aria-label="Volume"><Speaker waves={3} /></TrayButton>
          <Clock dateTime="2024-09-04T20:34"><span>20:34</span><span>2024-09-04</span></Clock>
          <TrayButton aria-label="Notifications"><Bell /></TrayButton>
        </Tray>
      </Taskbar>
    </Desktop>
  );
}
